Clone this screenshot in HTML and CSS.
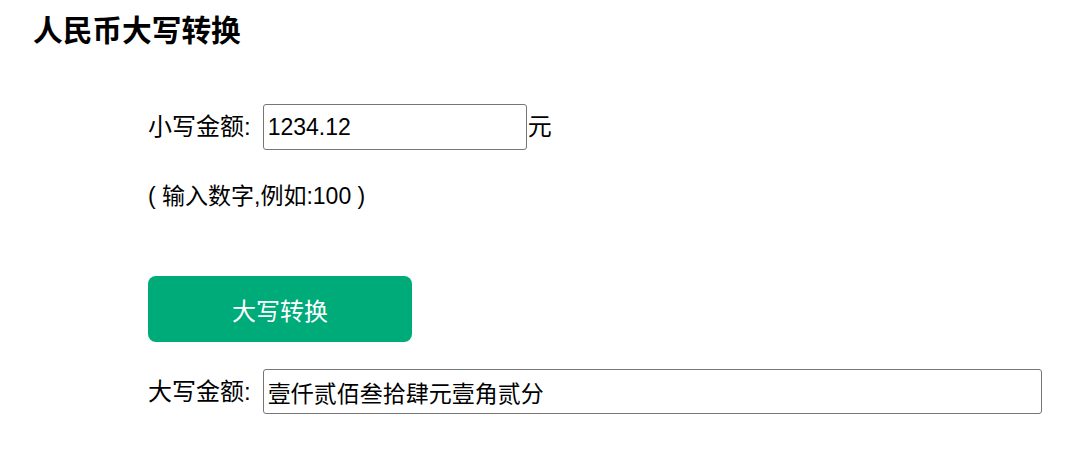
FILE: index.html
```html
<!DOCTYPE html>
<html lang="zh-CN">
<head>
<meta charset="utf-8">
<title>人民币大写转换</title>
<link rel="stylesheet" href="styles.css">
</head>
<body>
<h1 class="title">人民币大写转换</h1>
<div class="form">
  <div class="row">
    <span class="label">小写金额:</span>
    <input class="field field-small" type="text" value="1234.12">
    <span class="unit">元</span>
  </div>
  <div class="hint">( 输入数字,例如:100 )</div>
  <button class="btn" type="button">大写转换</button>
  <div class="row row-result">
    <span class="label">大写金额:</span>
    <input class="field field-large" type="text" value="壹仟贰佰叁拾肆元壹角贰分">
  </div>
</div>
</body>
</html>
```
FILE: styles.css
```css
* { box-sizing: border-box; }
html, body {
  margin: 0;
  background: #ffffff;
}
body {
  padding: 13px 33px 0;
  font-family: "Liberation Sans", "Noto Sans CJK SC", sans-serif;
  color: #000;
}
.title {
  margin: 0;
  font-size: 29.7px;
  line-height: 36px;
  font-weight: bold;
}
.form {
  padding-left: 115px;
  padding-top: 55px;
  display: flex;
  flex-direction: column;
  align-items: flex-start;
}
.row {
  display: flex;
  align-items: center;
  font-size: 24px;
  line-height: 30px;
}
.label {
  margin-right: 12px;
}
.field {
  font-family: "Liberation Sans", "Noto Sans CJK SC", sans-serif;
  font-size: 23px;
  color: #000;
  border: 1px solid #767676;
  border-radius: 3px;
  padding: 0 0 0 4px;
  margin: 0;
  background: #fff;
  outline: none;
}
.field-small {
  width: 264px;
  height: 46px;
}
.field-large {
  width: 779px;
  height: 45px;
}
.unit {
  margin-left: 1px;
}
.hint {
  margin-top: 31px;
  font-size: 23px;
  line-height: 30px;
}
.btn {
  margin-top: 65px;
  width: 264px;
  height: 66px;
  border: none;
  border-radius: 8px;
  background: #00ab7a;
  color: #fff;
  font-family: "Liberation Sans", "Noto Sans CJK SC", sans-serif;
  font-size: 24px;
  padding: 0;
}
.row-result {
  margin-top: 27px;
}
```
